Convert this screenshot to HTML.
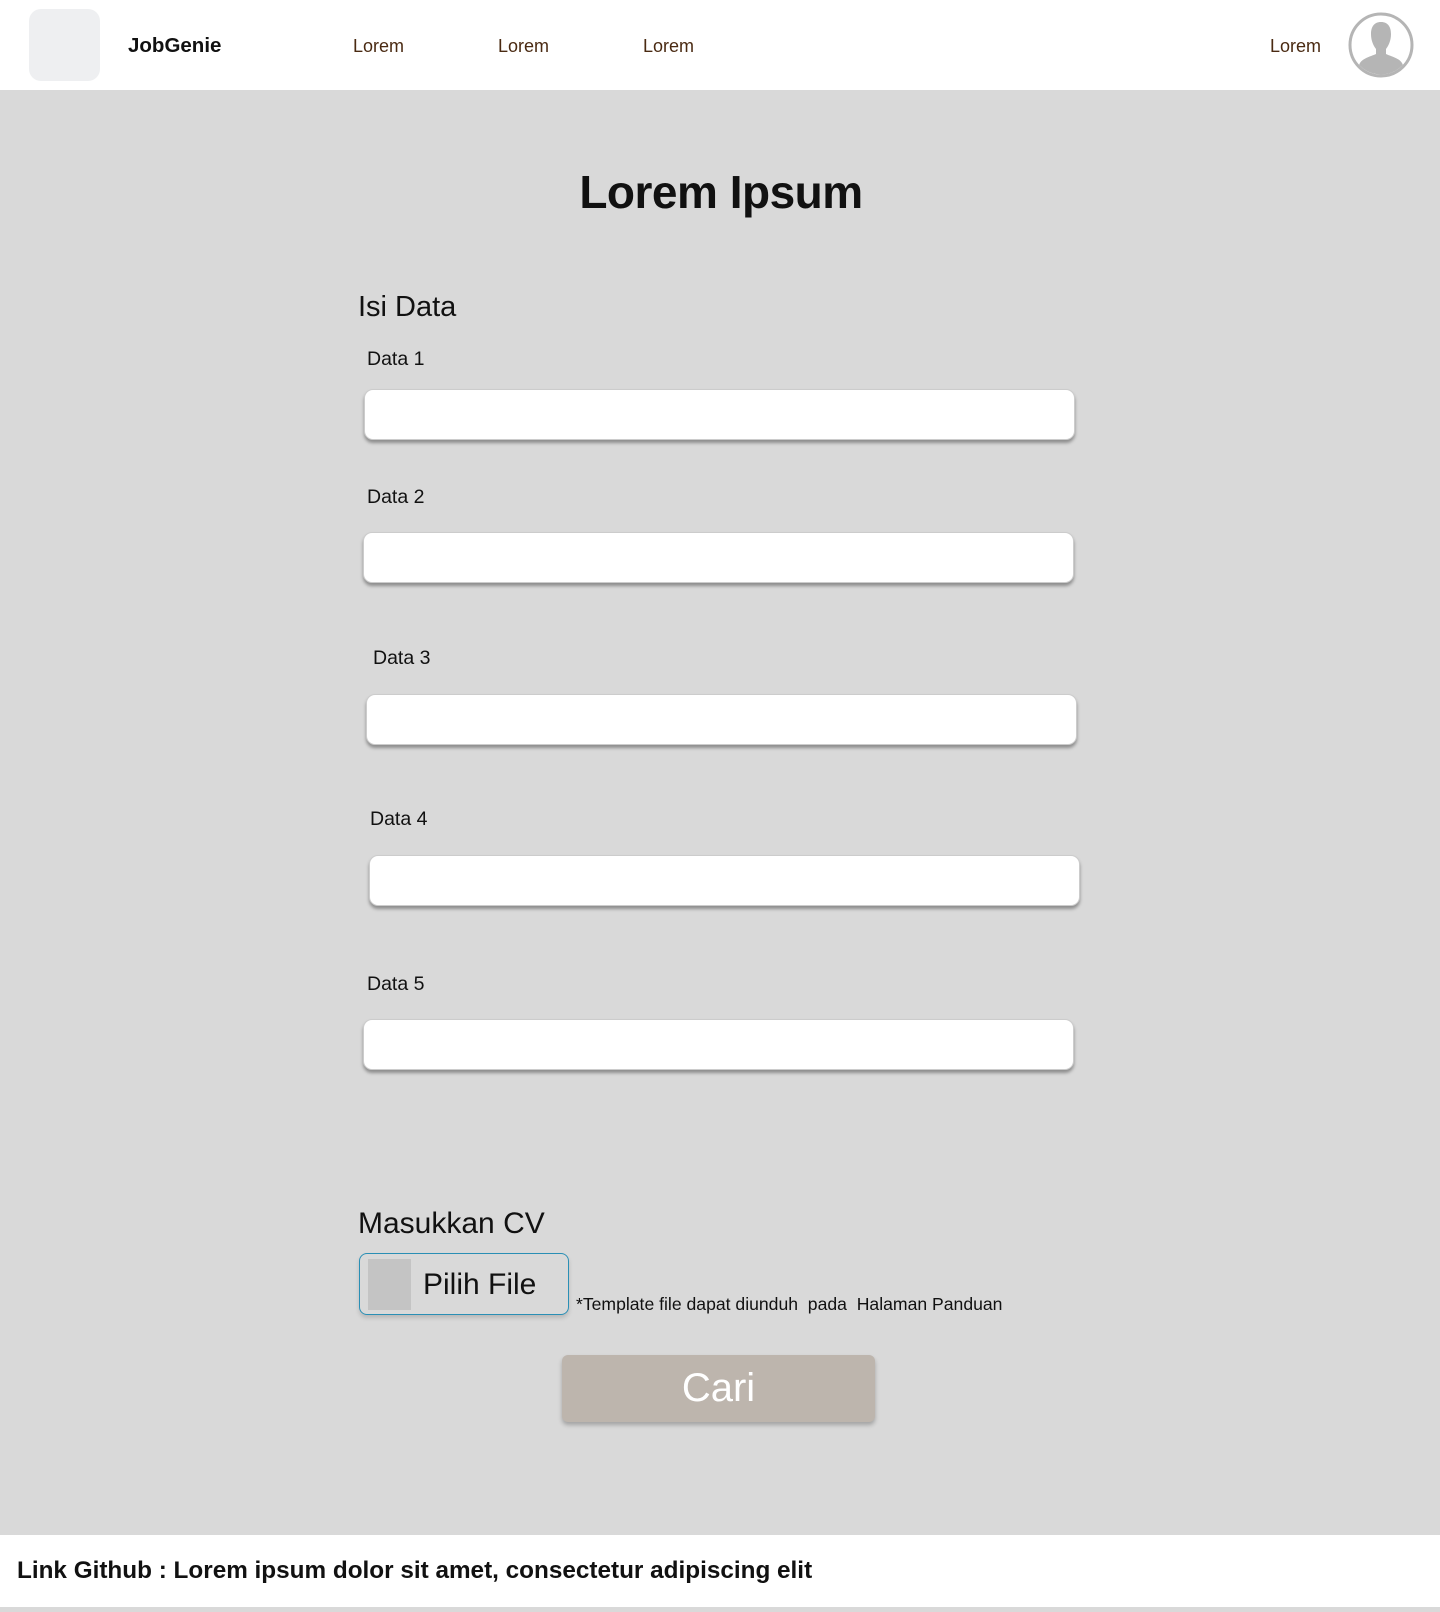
<!DOCTYPE html>
<html><head><meta charset="utf-8"><style>
*{margin:0;padding:0;box-sizing:border-box}
body{width:1440px;height:1612px;background:#d9d9d9;font-family:"Liberation Sans",sans-serif;position:relative;overflow:hidden}
.abs{position:absolute}
header{position:absolute;left:0;top:0;width:1440px;height:90px;background:#fff}
.nav{position:absolute;top:36px;font-size:18px;color:#4a2a12;line-height:20px}
.lbl{position:absolute;font-size:19.5px;color:#111;line-height:22px}
.inp{position:absolute;width:711px;height:51px;background:#fff;border-radius:9px;box-shadow:0 3px 3px rgba(0,0,0,.35);border:1px solid #ccc}
</style></head><body>
<header>
<div class="abs" style="left:29px;top:9px;width:71px;height:72px;background:#eeeff1;border-radius:12px"></div>
<div class="abs" style="left:128px;top:34px;font-size:20.5px;font-weight:bold;color:#111">JobGenie</div>
<div class="nav" style="left:353px">Lorem</div>
<div class="nav" style="left:498px">Lorem</div>
<div class="nav" style="left:643px">Lorem</div>
<div class="nav" style="left:1270px">Lorem</div>
<svg class="abs" style="left:1348px;top:12px" width="66" height="66" viewBox="0 0 66 66">
<circle cx="33" cy="33" r="31" fill="#fff" stroke="#b5b5b5" stroke-width="3"/>
<clipPath id="c"><circle cx="33" cy="33" r="29.5"/></clipPath>
<g clip-path="url(#c)" fill="#b5b5b5">
<path d="M33 10c-7 0-10 5-10 12 0 6 2 11 5 15v5c-4 2-13 4-16 9-2 3-2 8-2 15h46c0-7 0-12-2-15-3-5-12-7-16-9v-5c3-4 5-9 5-15 0-7-3-12-10-12z"/>
</g></svg>
</header>
<div class="abs" style="left:0;width:1442px;top:165px;text-align:center;font-size:46px;font-weight:bold;color:#111;letter-spacing:-0.5px">Lorem Ipsum</div>
<div class="abs" style="left:358px;top:291px;font-size:29px;color:#111">Isi Data</div>
<div class="lbl" style="left:367px;top:348px">Data 1</div>
<div class="inp" style="left:364px;top:389px"></div>
<div class="lbl" style="left:367px;top:486px">Data 2</div>
<div class="inp" style="left:363px;top:532px"></div>
<div class="lbl" style="left:373px;top:647px">Data 3</div>
<div class="inp" style="left:366px;top:694px"></div>
<div class="lbl" style="left:370px;top:808px">Data 4</div>
<div class="inp" style="left:369px;top:855px"></div>
<div class="lbl" style="left:367px;top:973px">Data 5</div>
<div class="inp" style="left:363px;top:1019px"></div>
<div class="abs" style="left:358px;top:1207px;font-size:30px;color:#111">Masukkan CV</div>
<div class="abs" style="left:359px;top:1253px;width:210px;height:62px;border:1.5px solid #2a8fb5;border-radius:8px;box-shadow:0 3px 4px rgba(0,0,0,.15)"></div>
<div class="abs" style="left:368px;top:1259px;width:43px;height:51px;background:#c4c4c4"></div>
<div class="abs" style="left:423px;top:1268px;font-size:30px;color:#111">Pilih File</div>
<div class="abs" style="left:576px;top:1294px;font-size:17.6px;color:#111">*Template file dapat diunduh&nbsp; pada&nbsp; Halaman Panduan</div>
<div class="abs" style="left:562px;top:1355px;width:313px;height:67px;background:#bdb5ad;border-radius:6px;box-shadow:0 3px 4px rgba(0,0,0,.25);color:#fff;font-size:40px;text-align:center;line-height:67px">Cari</div>
<div class="abs" style="left:0;top:1535px;width:1440px;height:72px;background:#fff"></div>
<div class="abs" style="left:17px;top:1557px;font-size:24.3px;font-weight:bold;color:#111">Link Github : Lorem ipsum dolor sit amet, consectetur adipiscing elit</div>
</body></html>
